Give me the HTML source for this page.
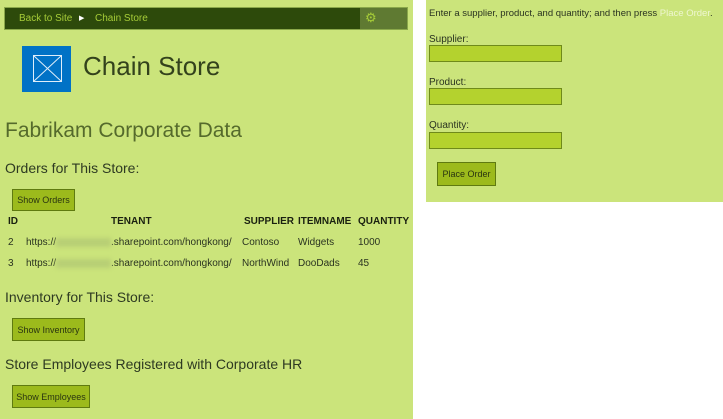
<!DOCTYPE html>
<html><head><style>
body{margin:0;width:723px;height:419px;background:#fff;position:relative;overflow:hidden;font-family:"Segoe UI","Liberation Sans",sans-serif;}
.a{position:absolute;white-space:nowrap;}
.btn{position:absolute;background:#9cba1c;border:1px solid #5f7a10;font-size:9px;color:#2a3510;display:flex;align-items:center;justify-content:center;box-sizing:border-box;}
.inp{position:absolute;left:429px;width:133px;height:17px;background:#b4d22e;border:1px solid #6f8a1a;box-sizing:border-box;}
.t{font-size:10px;color:#2a3320;}
.h{font-size:10px;font-weight:bold;color:#1a2010;}
.blur{display:inline-block;width:55px;height:9px;background:#b8cf75;filter:blur(2px);vertical-align:middle;}
</style></head><body>
<div class="a" style="left:0;top:0;width:413px;height:419px;background:#cbe47b"></div>
<div class="a" style="left:426px;top:0;width:297px;height:202px;background:#cbe47b"></div>

<div class="a" style="left:4px;top:7px;width:404px;height:23px;background:#2d4a0b;border:1px solid #8aa84a;box-sizing:border-box"></div>
<div class="a" style="left:360px;top:8px;width:47px;height:21px;background:#5f7a32"></div>
<div class="a" style="left:19px;top:13px;font-size:10px;color:#a6cc38">Back to Site</div>
<div class="a" style="left:79px;top:14px;font-size:7px;color:#fff">&#9654;</div>
<div class="a" style="left:95px;top:13px;font-size:10px;color:#a6cc38">Chain Store</div>
<div class="a" style="left:365px;top:10px;font-size:13px;color:#a6cc38">&#9881;</div>

<div class="a" style="left:22px;top:46px;width:49px;height:46px;background:#0072c6"></div>
<svg class="a" style="left:33px;top:55px" width="29" height="27"><rect x="0.5" y="0.5" width="28" height="26" fill="none" stroke="#dfeefa" stroke-width="1"/><path d="M0.5 0.5L28.5 26.5M28.5 0.5L0.5 26.5" stroke="#dfeefa" stroke-width="1"/></svg>
<div class="a" style="left:83px;top:51px;font-size:26px;color:#33421c">Chain Store</div>

<div class="a" style="left:5px;top:119px;font-size:21px;color:#556a2c">Fabrikam Corporate Data</div>
<div class="a" style="left:5px;top:160px;font-size:14px;color:#2e3a22">Orders for This Store:</div>
<div class="btn" style="left:12px;top:189px;width:63px;height:22px">Show Orders</div>

<div class="a h" style="left:8px;top:216px">ID</div>
<div class="a h" style="left:111px;top:216px">TENANT</div>
<div class="a h" style="left:244px;top:216px">SUPPLIER</div>
<div class="a h" style="left:298px;top:216px">ITEMNAME</div>
<div class="a h" style="left:358px;top:216px">QUANTITY</div>

<div class="a t" style="left:8px;top:237px">2</div>
<div class="a t" style="left:26px;top:237px">https://<span class="blur"></span>.sharepoint.com/hongkong/</div>
<div class="a t" style="left:242px;top:237px">Contoso</div>
<div class="a t" style="left:298px;top:237px">Widgets</div>
<div class="a t" style="left:358px;top:237px">1000</div>
<div class="a t" style="left:8px;top:258px">3</div>
<div class="a t" style="left:26px;top:258px">https://<span class="blur"></span>.sharepoint.com/hongkong/</div>
<div class="a t" style="left:242px;top:258px">NorthWind</div>
<div class="a t" style="left:298px;top:258px">DooDads</div>
<div class="a t" style="left:358px;top:258px">45</div>

<div class="a" style="left:5px;top:289px;font-size:14px;color:#2e3a22">Inventory for This Store:</div>
<div class="btn" style="left:12px;top:318px;width:73px;height:23px">Show Inventory</div>
<div class="a" style="left:5px;top:356px;font-size:14px;color:#2e3a22">Store Employees Registered with Corporate HR</div>
<div class="btn" style="left:12px;top:385px;width:78px;height:23px">Show Employees</div>

<div class="a" style="left:429px;top:8px;font-size:9.5px;color:#2a3320">Enter a supplier, product, and quantity; and then press <span style="color:#eef6d0">Place Order</span>.</div>
<div class="a t" style="left:429px;top:34px">Supplier:</div>
<div class="inp" style="top:45px"></div>
<div class="a t" style="left:429px;top:77px">Product:</div>
<div class="inp" style="top:88px"></div>
<div class="a t" style="left:429px;top:120px">Quantity:</div>
<div class="inp" style="top:132px"></div>
<div class="btn" style="left:437px;top:162px;width:59px;height:24px">Place Order</div>
</body></html>
